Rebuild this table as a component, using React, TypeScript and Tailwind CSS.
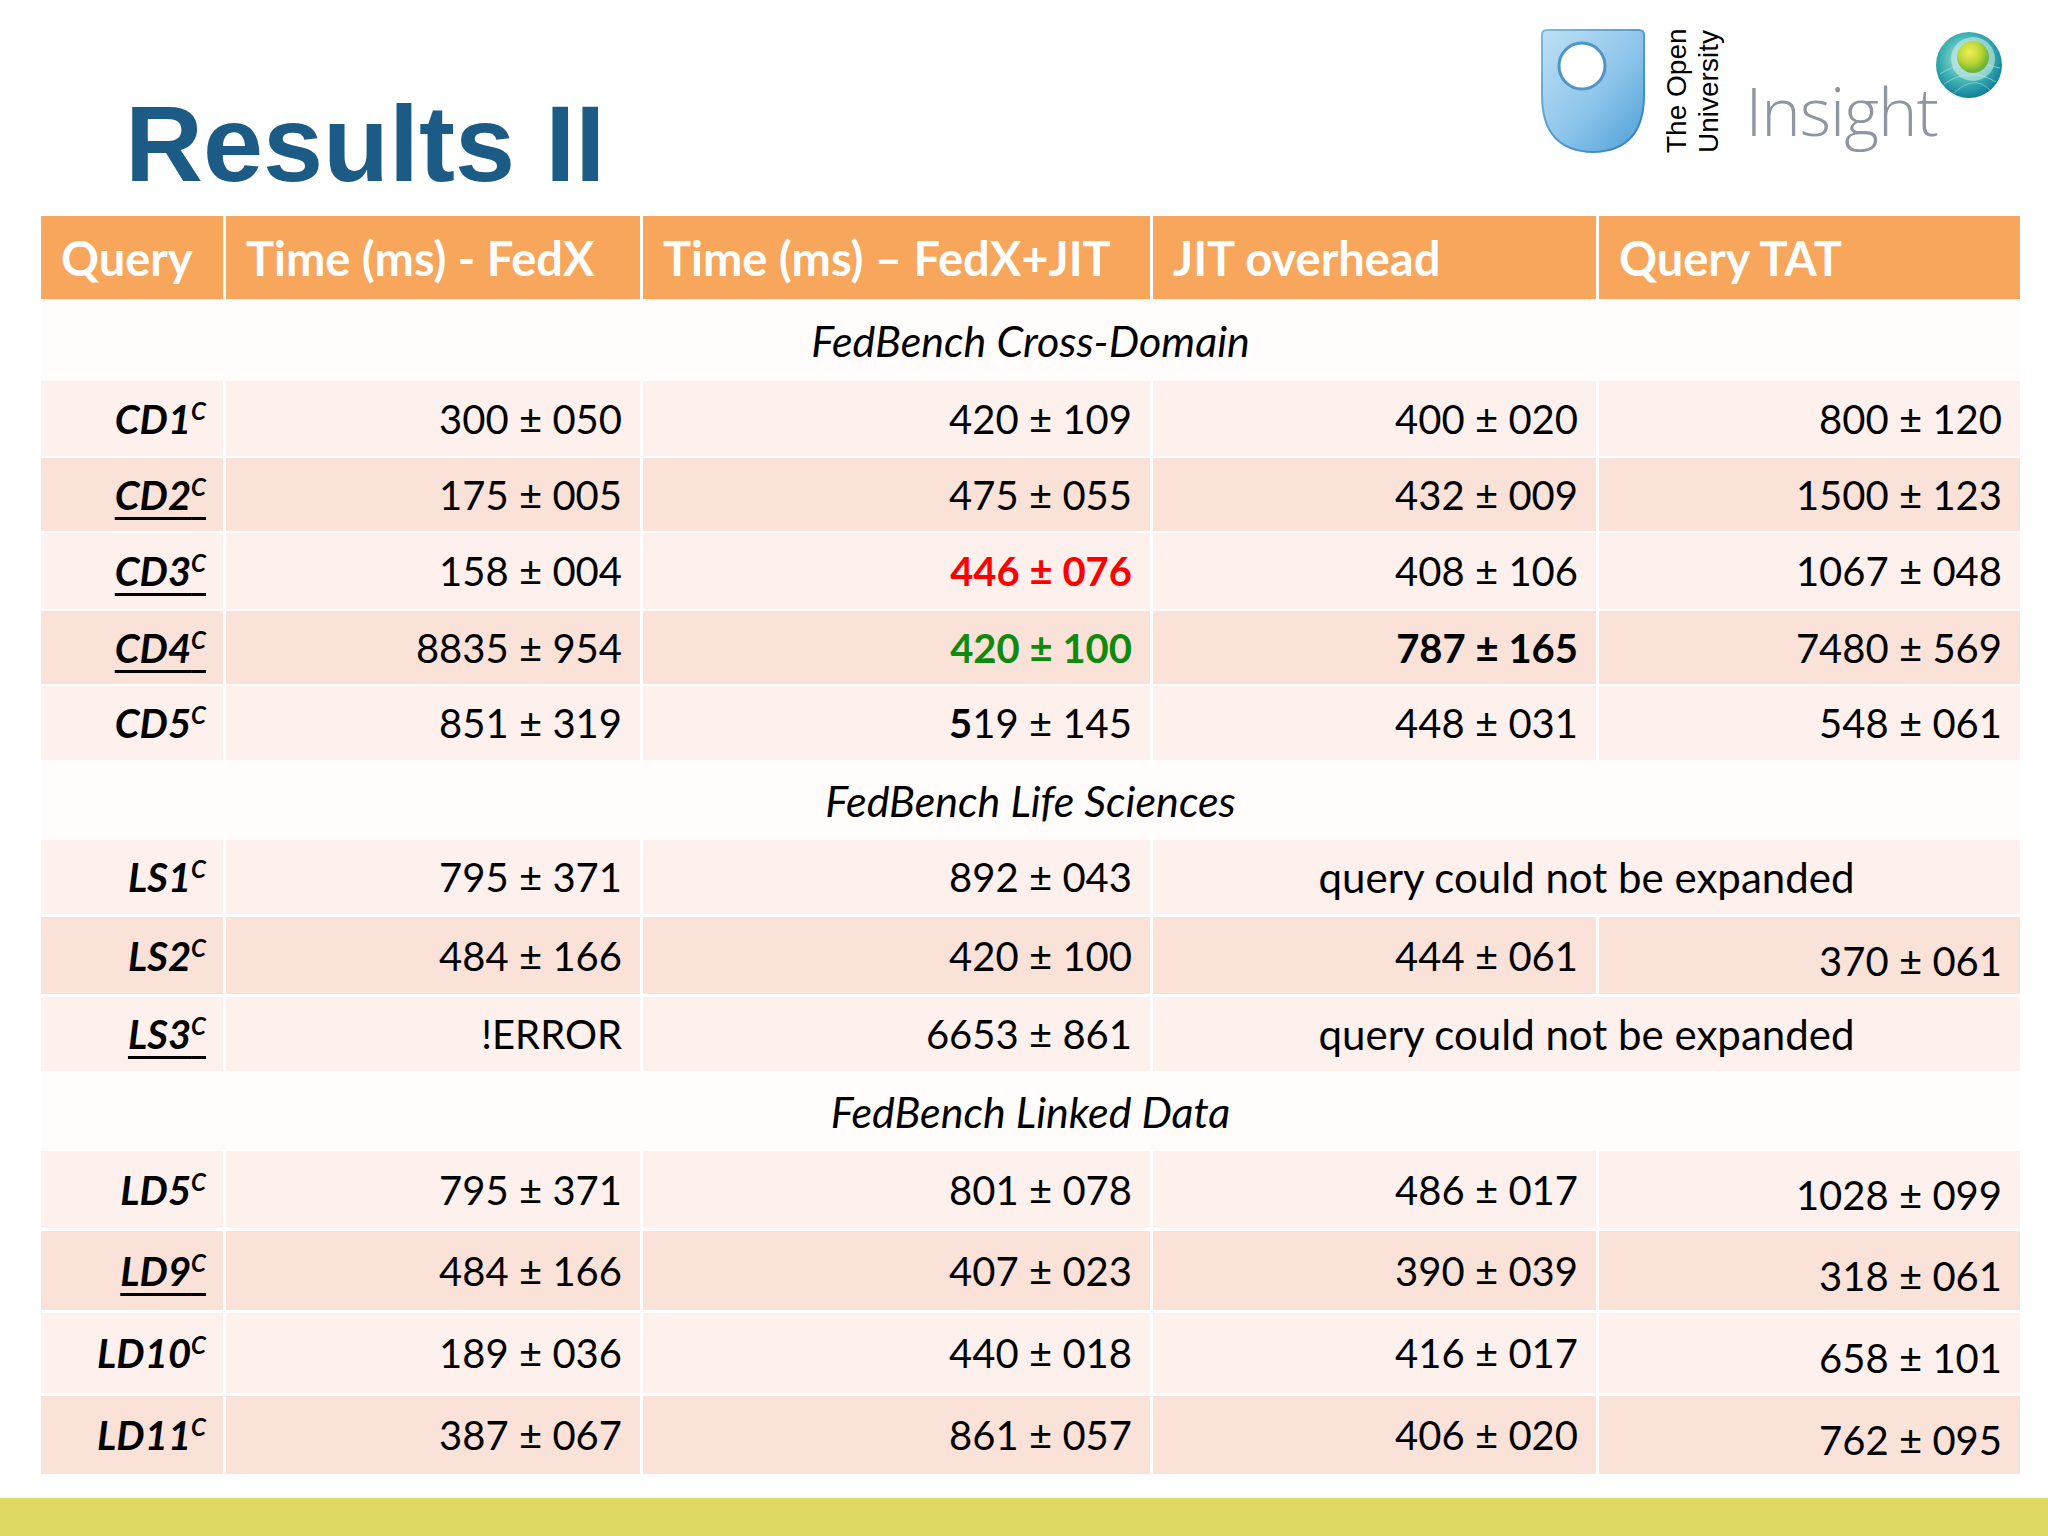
import React from 'react';

const COLS = 'grid grid-cols-[182px_414px_507px_443px_421px] gap-x-[3px]';
const LIGHT = 'bg-[#fdf0ed]';
const DARK = 'bg-[#fbe2d8]';

type Cell = React.ReactNode;

interface Row {
  q: string;
  u?: boolean;
  cells: Cell[];
  h: number;
  dark?: boolean;
  merged?: boolean;
  lowLast?: boolean;
}

const CD: Row[] = [
  { q: 'CD1', h: 75, cells: ['300 ± 050', '420 ± 109', '400 ± 020', '800 ± 120'] },
  { q: 'CD2', u: true, h: 73, dark: true, cells: ['175 ± 005', '475 ± 055', '432 ± 009', '1500 ± 123'] },
  {
    q: 'CD3',
    u: true,
    h: 76,
    cells: ['158 ± 004', <span className="font-bold text-[#ff0000]">446 ± 076</span>, '408 ± 106', '1067 ± 048'],
  },
  {
    q: 'CD4',
    u: true,
    h: 73,
    dark: true,
    cells: [
      '8835 ± 954',
      <span className="font-bold text-[#0e8a0e]">420 ± 100</span>,
      <span className="font-bold">787 ± 165</span>,
      '7480 ± 569',
    ],
  },
  {
    q: 'CD5',
    h: 74,
    cells: [
      '851 ± 319',
      <span>
        <span className="font-bold">5</span>19 ± 145
      </span>,
      '448 ± 031',
      '548 ± 061',
    ],
  },
];

const LS: Row[] = [
  { q: 'LS1', h: 74, merged: true, cells: ['795 ± 371', '892 ± 043', 'query could not be expanded'] },
  { q: 'LS2', h: 77, dark: true, lowLast: true, cells: ['484 ± 166', '420 ± 100', '444 ± 061', '370 ± 061'] },
  { q: 'LS3', u: true, h: 74, merged: true, cells: ['!ERROR', '6653 ± 861', 'query could not be expanded'] },
];

const LD: Row[] = [
  { q: 'LD5', h: 77, lowLast: true, cells: ['795 ± 371', '801 ± 078', '486 ± 017', '1028 ± 099'] },
  { q: 'LD9', u: true, h: 79, dark: true, lowLast: true, cells: ['484 ± 166', '407 ± 023', '390 ± 039', '318 ± 061'] },
  { q: 'LD10', h: 80, lowLast: true, cells: ['189 ± 036', '440 ± 018', '416 ± 017', '658 ± 101'] },
  { q: 'LD11', h: 78, dark: true, lowLast: true, cells: ['387 ± 067', '861 ± 057', '406 ± 020', '762 ± 095'] },
];

function OuLogo() {
  return (
    <svg width="104" height="124" viewBox="0 0 104 124">
      <defs>
        <linearGradient id="ouShield" x1="0" y1="0" x2="1" y2="1">
          <stop offset="0" stopColor="#bfe0f5" />
          <stop offset="0.55" stopColor="#8cc4ea" />
          <stop offset="1" stopColor="#4d9fd6" />
        </linearGradient>
        <linearGradient id="ouRim" x1="0" y1="0" x2="1" y2="1">
          <stop offset="0" stopColor="#7fb9e0" />
          <stop offset="1" stopColor="#2f7fbf" />
        </linearGradient>
      </defs>
      <path
        d="M6 1 H98 Q103 1 103 6 V66 Q103 122 52 123 Q1 122 1 66 V6 Q1 1 6 1 Z"
        fill="url(#ouShield)"
        stroke="url(#ouRim)"
        strokeWidth="2"
      />
      <circle cx="41" cy="37" r="23" fill="#ffffff" stroke="#4f95c6" strokeWidth="3" />
    </svg>
  );
}

function Globe() {
  return (
    <svg width="70" height="70" viewBox="0 0 70 70">
      <defs>
        <radialGradient id="gOuter" cx="0.45" cy="0.4" r="0.6">
          <stop offset="0" stopColor="#bfe7e0" />
          <stop offset="0.6" stopColor="#3fb3b3" />
          <stop offset="1" stopColor="#137f9a" />
        </radialGradient>
        <radialGradient id="gBall" cx="0.4" cy="0.35" r="0.6">
          <stop offset="0" stopColor="#f1ee5a" />
          <stop offset="0.6" stopColor="#b9d636" />
          <stop offset="1" stopColor="#6fb43a" />
        </radialGradient>
      </defs>
      <circle cx="35" cy="35" r="33" fill="url(#gOuter)" />
      <path d="M6 44 Q30 28 66 38" stroke="#9fe0e8" strokeWidth="1" fill="none" opacity="0.7" />
      <path d="M10 54 Q36 36 62 52" stroke="#9fe0e8" strokeWidth="1" fill="none" opacity="0.7" />
      <path d="M20 63 Q40 44 56 60" stroke="#9fe0e8" strokeWidth="1" fill="none" opacity="0.6" />
      <circle cx="39" cy="29" r="22" fill="#d7f0ec" opacity="0.55" />
      <circle cx="39" cy="27" r="16" fill="url(#gBall)" />
    </svg>
  );
}

function QueryCell({ q, u, bg }: { q: string; u?: boolean; bg: string }) {
  return (
    <div className={`${bg} flex items-center justify-end pr-[17px]`}>
      <span
        className={
          u
            ? 'font-bold italic underline decoration-[3px] underline-offset-[7px]'
            : 'font-bold italic'
        }
      >
        {q}
        <sup className="text-[24px] top-[-14px]">C</sup>
      </span>
    </div>
  );
}

function DataRow({ row }: { row: Row }) {
  const bg = row.dark ? DARK : LIGHT;
  return (
    <div className={COLS} style={{ height: row.h }}>
      <QueryCell q={row.q} u={row.u} bg={bg} />
      {row.merged ? (
        <>
          <div className={`${bg} flex items-center justify-end pr-[18px]`}>{row.cells[0]}</div>
          <div className={`${bg} flex items-center justify-end pr-[18px]`}>{row.cells[1]}</div>
          <div className={`${bg} col-span-2 flex items-center justify-center text-[42px]`}>
            {row.cells[2]}
          </div>
        </>
      ) : (
        row.cells.map((c, i) => (
          <div
            key={i}
            className={
              i === 3 && row.lowLast
                ? `${bg} flex items-center justify-end pr-[18px] pt-[10px]`
                : `${bg} flex items-center justify-end pr-[18px]`
            }
          >
            {c}
          </div>
        ))
      )}
    </div>
  );
}

function Group({ rows, gap }: { rows: Row[]; gap: string }) {
  return (
    <div className={`flex flex-col ${gap}`}>
      {rows.map((r) => (
        <DataRow key={r.q} row={r} />
      ))}
    </div>
  );
}

function Section({ label, h }: { label: string; h: number }) {
  return (
    <div
      className="flex items-center justify-center bg-[#fffcfb] text-[43px] italic"
      style={{ height: h }}
    >
      {label}
    </div>
  );
}

export default function App() {
  return (
    <div className="relative flex h-[1536px] w-[2048px] flex-col bg-white text-[40px] leading-none text-black [font-family:Lato,'Open_Sans',sans-serif]">
      <header className="flex h-[216px] items-start justify-between">
        <h1 className="pl-[125px] pt-[85px] text-[108px] font-bold leading-[1.1] text-[#1c5b86] [font-family:'Liberation_Sans',Arial,sans-serif]">
          Results II
        </h1>
        <div className="flex items-start pr-[44px] pt-[29px]">
          <OuLogo />
          <div className="ml-[16px] mt-[1px] h-[123px] rotate-180 whitespace-nowrap text-[28px] leading-[32px] text-black [writing-mode:vertical-rl] [font-family:'Liberation_Sans',Arial,sans-serif]">
            <span className="block">The Open</span>
            <span className="block">University</span>
          </div>
          <div className="ml-[20px] mt-[48px] text-[67px] font-light leading-none tracking-[-1px] text-[#8f96a2] [font-family:'Open_Sans',sans-serif]">
            Insight
          </div>
          <div className="-ml-[4px] mt-[1px]">
            <Globe />
          </div>
        </div>
      </header>

      <main className="ml-[41px] w-[1979px]">
        <div className={`${COLS} h-[83px] text-[47px] font-bold text-white`}>
          {['Query', 'Time (ms) - FedX', 'Time (ms) – FedX+JIT', 'JIT overhead', 'Query TAT'].map((t) => (
            <div key={t} className="flex items-center bg-[#f7a65b] pl-[20px] pt-[2px]">
              {t}
            </div>
          ))}
        </div>
        <Section label="FedBench Cross-Domain" h={82} />
        <Group rows={CD} gap="gap-[2px]" />
        <Section label="FedBench Life Sciences" h={80} />
        <Group rows={LS} gap="gap-[3px]" />
        <Section label="FedBench Linked Data" h={80} />
        <Group rows={LD} gap="gap-[3px]" />
      </main>

      <div className="mt-auto h-[38px] bg-[#dfd862]" />
    </div>
  );
}
